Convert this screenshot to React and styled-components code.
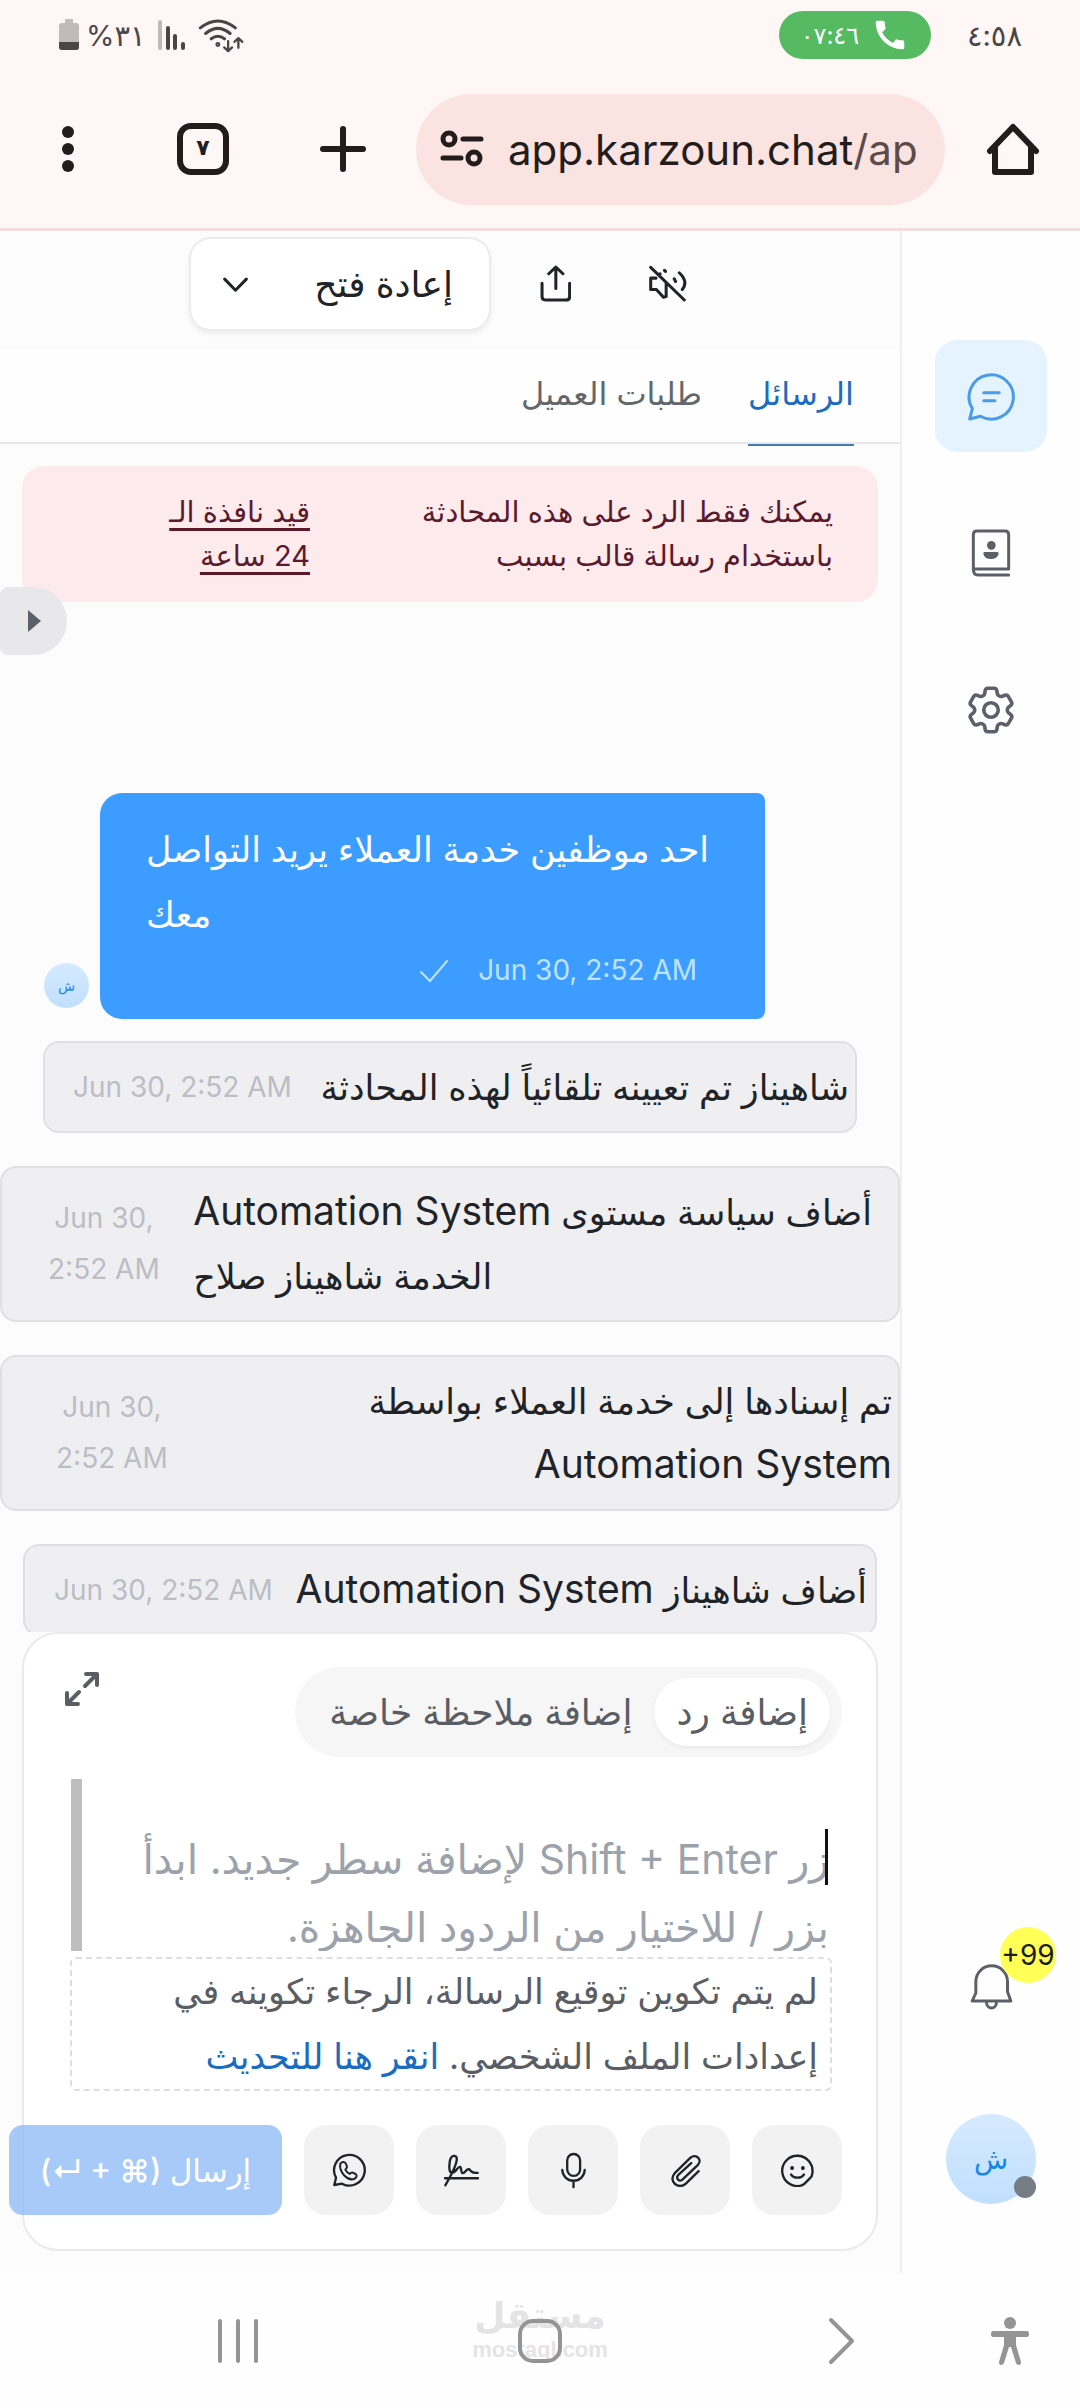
import React, { useState } from 'react';
import styled, { createGlobalStyle } from 'styled-components';
import { MdCall } from 'react-icons/md';
import { HiOutlineCog6Tooth } from 'react-icons/hi2';

const GlobalStyle = createGlobalStyle`
  * {
    box-sizing: border-box;
  }
  body {
    margin: 0;
    background: #fefefe;
    font-family: Inter, "DejaVu Sans", sans-serif;
    color: #202327;
  }
  button {
    font-family: inherit;
    color: inherit;
    border: 0;
    padding: 0;
    background: none;
    cursor: pointer;
  }
  svg {
    display: block;
    flex: none;
  }
`;

const Screen = styled.div`
  display: flex;
  flex-direction: column;
  height: 100vh;
  overflow: hidden;
`;

/* Phone status bar */

const Chrome = styled.header`
  background: #fff7f5;
  border-bottom: 3px solid #f0dfde;
  flex: none;
`;

const StatusBar = styled.div`
  display: flex;
  justify-content: space-between;
  align-items: center;
  height: 70px;
  padding: 0 58px;
  color: #4a4646;
  font-size: 29px;
`;

const StatusGroup = styled.div`
  display: flex;
  align-items: center;
  gap: ${({ $gap }) => $gap}px;
`;

const CallPill = styled.div`
  display: flex;
  align-items: center;
  justify-content: center;
  gap: 12px;
  width: 152px;
  height: 48px;
  border-radius: 24px;
  background: #55ba62;
  color: #fff;
  font-size: 24px;
`;

/* Browser toolbar */

const BrowserBar = styled.div`
  display: grid;
  grid-template-columns: 136px 134px 146px 1fr 135px;
  align-items: center;
  justify-items: center;
  height: 158px;
  color: #231c1c;
`;

const TabCount = styled.button`
  width: 52px;
  height: 52px;
  padding-bottom: 4px;
  border: 6px solid #231c1c;
  border-radius: 14px;
  font-size: 22px;
  font-weight: 700;
  line-height: 30px;
`;

const Address = styled.button`
  display: flex;
  align-items: center;
  justify-self: stretch;
  gap: 24px;
  height: 111px;
  padding: 0 20px 0 24px;
  border-radius: 56px;
  background: #fae3e1;
  font-size: 42px;
  white-space: nowrap;
  overflow: hidden;

  span span {
    color: #5d4a4a;
  }
`;

/* Application */

const AppArea = styled.div`
  display: flex;
  flex: 1;
  min-height: 0;
`;

const Sidebar = styled.nav`
  display: flex;
  flex-direction: column;
  align-items: center;
  width: 180px;
  padding: 109px 0 69px;
  border-left: 2px solid #efefef;
  background: #fefefe;
  flex: none;
`;

const SideItem = styled.button`
  display: flex;
  align-items: center;
  justify-content: center;
  position: relative;
  width: 112px;
  height: 112px;
  margin-bottom: ${({ $space }) => $space || 45}px;
  border-radius: 22px;
  color: ${({ $active }) => ($active ? '#4a9be8' : '#5c6169')};
  background: ${({ $active }) => ($active ? '#e4f3fd' : 'transparent')};
`;

const Spacer = styled.div`
  flex: 1;
`;

const Badge = styled.span`
  position: absolute;
  top: -4px;
  right: -9px;
  width: 56px;
  height: 56px;
  border-radius: 50%;
  background: #ffff57;
  color: #1c1c1c;
  font-size: 28px;
  line-height: 56px;
  text-align: center;
`;

const Avatar = styled.span`
  display: block;
  position: relative;
  width: ${({ $size }) => $size}px;
  height: ${({ $size }) => $size}px;
  border-radius: 50%;
  background: linear-gradient(#d6eafe, #c0dffe);
  color: #1687e6;
  font-size: ${({ $size }) => ($size > 60 ? 28 : 14)}px;
  line-height: ${({ $size }) => $size}px;
  text-align: center;
  flex: none;
`;

const Presence = styled.i`
  position: absolute;
  right: 0;
  bottom: 6px;
  width: 22px;
  height: 22px;
  border-radius: 50%;
  background: #787c85;
`;

const Conversation = styled.main`
  display: flex;
  flex-direction: column;
  position: relative;
  flex: 1;
  min-width: 0;
  overflow: hidden;
  background: #fcfcfc;
`;

const Actions = styled.div`
  display: flex;
  align-items: center;
  gap: 16px;
  height: 118px;
  padding: 0 185px 14px 0;
  flex: none;
`;

const IconButton = styled.button`
  display: flex;
  align-items: center;
  justify-content: center;
  width: 96px;
  height: 64px;
`;

const ReopenButton = styled.button`
  display: flex;
  align-items: center;
  justify-content: space-between;
  width: 302px;
  height: 94px;
  margin-top: 2px;
  padding: 0 36px 0 32px;
  border: 2px solid #ececec;
  border-radius: 22px;
  background: #fff;
  box-shadow: 0 3px 5px rgba(0, 0, 0, 0.06);
  font-size: 36px;
`;

const Tabs = styled.div`
  display: flex;
  gap: 46px;
  height: 95px;
  padding: 0 46px;
  border-bottom: 2px solid #e8e8e8;
  background: #fefefe;
  flex: none;
`;

const Tab = styled.button`
  height: 97px;
  padding-bottom: 6px;
  border-bottom: 2px solid ${({ $active }) => ($active ? '#3f7cb4' : 'transparent')};
  color: ${({ $active }) => ($active ? '#1a6cc0' : '#63666b')};
  font-size: 32px;
`;

const Alert = styled.div`
  display: flex;
  justify-content: space-between;
  margin: 22px 22px 0;
  padding: 24px 45px;
  border-radius: 22px;
  background: #fdeaec;
  color: #5b1a2c;
  font-size: 29px;
  line-height: 44px;
  flex: none;

  a {
    width: 243px;
    color: inherit;
    white-space: nowrap;
    text-decoration-thickness: 3px;
    text-underline-offset: 6px;
  }
`;

const PanelToggle = styled.button`
  display: flex;
  align-items: center;
  justify-content: center;
  position: absolute;
  left: 0;
  top: 356px;
  width: 67px;
  height: 68px;
  border-radius: 8px 34px 34px 8px;
  background: #e8e8eb;
  color: #5c6169;
`;

const MessageList = styled.div`
  display: flex;
  flex-direction: column;
  flex: 1;
  min-height: 0;
  overflow: hidden;
  padding-top: 191px;
`;

const MessageRow = styled.div`
  display: flex;
  align-items: flex-end;
  gap: 11px;
  margin: 0 135px 22px 44px;
  flex: none;
`;

const Bubble = styled.div`
  flex: 1;
  padding: 24px 50px 25px 46px;
  border-radius: 22px 8px 8px 22px;
  background: #3c9cff;
  color: #fff;
  font-size: 35px;
  line-height: 65px;
  text-align: left;
`;

const BubbleMeta = styled.div`
  display: flex;
  align-items: center;
  gap: 28px;
  padding-right: 18px;
  color: #bfe3ff;
  font-size: 28px;
  line-height: 47px;
`;

const AvatarSlot = styled.div`
  padding-bottom: 11px;
`;

const Event = styled.div`
  display: flex;
  align-items: center;
  justify-content: space-between;
  margin: 0 ${({ $right }) => $right || 0}px 33px ${({ $left }) => $left || 0}px;
  padding: 12px ${({ $textInset }) => $textInset}px 12px ${({ $timeInset }) => $timeInset}px;
  border: 2px solid #dfe0e4;
  border-radius: 16px;
  background: #efeff2;
  font-size: 35px;
  line-height: 64px;
  text-align: ${({ $align }) => $align || 'right'};
  flex: none;
`;

const Latin = styled.span`
  font-size: 39px;
  line-height: 1;
`;

const EventTime = styled.time`
  color: #bbbdc7;
  font-size: 28px;
  line-height: 51px;
  text-align: center;
`;

/* Composer */

const Composer = styled.form`
  margin: 0 22px 22px;
  height: 619px;
  padding: 33px 34px 0 44px;
  border: 2px solid #eaeaec;
  border-radius: 36px;
  background: #fff;
  flex: none;
`;

const ComposerTop = styled.div`
  display: flex;
  justify-content: space-between;
  align-items: flex-start;
`;

const ExpandButton = styled.button`
  margin: 4px 0 0 -4px;
  color: #5a5d63;
`;

const ModeSwitch = styled.div`
  display: flex;
  align-items: center;
  height: 90px;
  padding: 0 12px;
  border-radius: 45px;
  background: #f6f6f6;
`;

const Mode = styled.button`
  height: 68px;
  padding: 0 22px;
  border-radius: 34px;
  color: #5a5d63;
  font-size: 36px;
  background: ${({ $active }) => ($active ? '#fff' : 'transparent')};
  box-shadow: ${({ $active }) => ($active ? '0 2px 4px rgba(0, 0, 0, 0.06)' : 'none')};
`;

const Editor = styled.div`
  display: flex;
  position: relative;
  height: 172px;
  margin: 22px 13px 6px 3px;
`;

const TextBox = styled.textarea`
  flex: 1;
  min-width: 0;
  padding: 46px 0 0;
  border: 0;
  outline: 0;
  resize: none;
  overflow: hidden;
  background: transparent;
  font: 41px/68px Inter, "DejaVu Sans", sans-serif;

  &::placeholder {
    color: #9ca2ab;
    opacity: 1;
  }
`;

const Caret = styled.i`
  position: absolute;
  right: 1px;
  top: 50px;
  width: 3px;
  height: 56px;
  background: #111;
`;

const ScrollThumb = styled.div`
  width: 11px;
  background: #bebebe;
`;

const Signature = styled.p`
  margin: 0 10px 0 2px;
  padding: 0 12px;
  border: 2px dashed #dedede;
  border-radius: 6px;
  color: #5a5d63;
  font-size: 35px;
  line-height: 65px;
  white-space: nowrap;

  a {
    color: #1a6cc0;
    text-decoration: none;
  }
`;

const Toolbar = styled.div`
  display: flex;
  gap: 22px;
  margin-top: 34px;
`;

const ToolButton = styled.button`
  display: flex;
  align-items: center;
  justify-content: center;
  width: 90px;
  height: 90px;
  border-radius: 22px;
  background: #f2f2f3;
  flex: none;
`;

const SendButton = styled.button`
  width: 273px;
  height: 90px;
  border-radius: 14px;
  background: rgba(134, 182, 247, 0.72);
  color: #fff;
  font-size: 31px;
  font-weight: 500;
  white-space: nowrap;
  flex: none;
`;

/* System navigation */

const SystemNav = styled.footer`
  display: grid;
  grid-template-columns: 10fr 21fr 10fr 140px;
  align-items: center;
  justify-items: center;
  position: relative;
  height: 135px;
  padding-left: 140px;
  background: #fefefe;
  color: #949494;
  flex: none;
`;

const Watermark = styled.div`
  position: absolute;
  left: 50%;
  top: 20px;
  transform: translateX(-50%);
  color: #e4e4e4;
  font-family: "Liberation Sans", "DejaVu Sans", sans-serif;
  font-size: 22px;
  font-weight: 700;
  line-height: 22px;
  text-align: center;

  strong {
    display: block;
    font-size: 36px;
    line-height: 46px;
  }
`;

const NavButton = styled.button`
  position: relative;
`;

/* Stroke icon; each drawing brings its own view box */
const Icon = ({ box, size, height, stroke = 7, children }) => (
  <svg
    viewBox={box}
    width={size}
    height={height || size}
    fill="none"
    stroke="currentColor"
    strokeWidth={stroke}
    strokeLinecap="round"
    strokeLinejoin="round"
    aria-hidden="true"
  >
    {children}
  </svg>
);

const BatteryIcon = () => (
  <svg width="22" height="32" viewBox="0 0 22 32">
    <path d="M7 0h8v4h3a3 3 0 0 1 3 3v21a3 3 0 0 1-3 3H4a3 3 0 0 1-3-3V7a3 3 0 0 1 3-3h3z" fill="#c0bbba" />
    <path d="M1 23h20v5a3 3 0 0 1-3 3H4a3 3 0 0 1-3-3z" fill="#4a4646" />
  </svg>
);

const SignalIcon = () => (
  <Icon box="0 0 28 32" size={28} height={32} stroke={4}>
    <path d="M2 3v26" stroke="#c0b8b7" />
    <path d="M10 9v20M17 17v12M25 25v4" />
  </Icon>
);

const WifiIcon = () => (
  <Icon box="470 48 142 110" size={47} height={37} stroke={9}>
    <path d="M477 80Q530 38 583 80M493 97Q530 66 567 97M510 113Q530 98 550 113" />
    <circle cx="530" cy="130" r="3" />
    <path d="M561 120v28M549 139l12 11 12-11M592 140v-27M580 122l12-11 12 11" strokeWidth="7" />
  </Icon>
);

const SiteInfoIcon = () => (
  <Icon box="0 0 44 38" size={44} height={38} stroke={5}>
    <circle cx="9" cy="9" r="6" />
    <path d="M23 9h18M3 28h18" />
    <circle cx="34" cy="28" r="6" />
  </Icon>
);

const HomeIcon = () => (
  <Icon box="0 0 54 54" size={54} stroke={6}>
    <path d="M4 29L27 5l23 24M9 26v24h36V26" />
  </Icon>
);

const ChatIcon = () => (
  <Icon box="200 154 146 146" size={49} stroke={9}>
    <path d="M216 263A66 66 0 1 1 240 286L208 294Z" />
    <path d="M250 216h46M250 240h33" />
  </Icon>
);

const ContactsIcon = () => (
  <Icon box="203 630 144 144" size={48} stroke={9}>
    <path d="M222 750V647q0-11 11-11h84q11 0 11 11v103H222q0 18 14 18h92" />
    <circle cx="276" cy="679" r="13" fill="currentColor" stroke="none" />
    <path d="M256 699h38q5 0 4 5-4 16-23 16-20 0-23-16-1-5 4-5z" fill="currentColor" stroke="none" />
  </Icon>
);

const BellIcon = () => (
  <Icon box="203 190 140 144" size={47} height={48} stroke={9}>
    <path d="M226 280v-34a47 47 0 0 1 95 0v30l10 28H215z" />
    <path d="M258 308a15 17 0 0 0 30 0" />
  </Icon>
);

const MuteIcon = () => (
  <Icon box="1372 90 116 110" size={39} height={37} stroke={9}>
    <path d="M1380 97l100 97M1396 129h-16v34h17l21 23 8-2v-40M1404 118l4-2M1421 106l3 3M1450 131l4 8M1465 113q28 26 9 50" />
  </Icon>
);

const ShareIcon = () => (
  <Icon box="1044 90 92 110" size={31} height={37} stroke={9}>
    <path d="M1050 144v40q0 10 10 10h62q10 0 10-10v-40M1091 160V97M1070 116l21-20 21 20" />
  </Icon>
);

const SmileIcon = () => (
  <Icon box="1440 128 98 98" size={33}>
    <path d="M1505 220A45 45 0 1 1 1532 190q0 5-5 9l-17 17q-3 3-7 4" />
    <path d="M1470 189a21 16 0 0 0 38 0" />
    <path d="M1473 169v1M1505 169v1" strokeWidth="11" />
  </Icon>
);

const ClipIcon = () => (
  <Icon box="1102 128 98 98" size={33}>
    <path d="M1190 179l-38 37c-22 20-54-8-33-31l47-46c16-14 36 6 22 21l-47 45c-8 6-20-4-12-14l39-36" />
  </Icon>
);

const MicIcon = () => (
  <Icon box="775 124 80 112" size={27} height={37}>
    <rect x="796" y="130" width="39" height="66" rx="19" />
    <path d="M781 178a34 33 0 0 0 68 0M815 213v18" />
  </Icon>
);

const SignatureIcon = () => (
  <Icon box="424 126 110 104" size={37} height={35}>
    <path d="M431 222c14-24 34-58 34-78 0-14-18-14-21 8-3 20-1 33 7 33 11 0 15-17 23-18 6 0 2 19 9 19s11-14 18-12c6 3 6 13 26 11M430 201h98" />
  </Icon>
);

const WhatsappIcon = () => (
  <Icon box="90 126 102 102" size={34}>
    <path d="M102 200a46 46 0 1 1 18 18l-23 4z" />
    <path d="M115 158c6-7 14-6 17 1l3 8q0 4-5 9 4 8 13 13 5-5 9-4l9 4c6 4 2 12-5 15-18 6-46-19-41-46z" strokeWidth="6" />
  </Icon>
);

const TOOLS = [
  { label: 'رموز تعبيرية', Glyph: SmileIcon },
  { label: 'مرفق', Glyph: ClipIcon },
  { label: 'تسجيل صوتي', Glyph: MicIcon },
  { label: 'توقيع', Glyph: SignatureIcon },
  { label: 'قالب واتساب', Glyph: WhatsappIcon },
];

const BrowserChrome = () => (
  <Chrome>
    <StatusBar>
      <StatusGroup $gap={12}>
        <StatusGroup $gap={6}>
          <BatteryIcon />
          <span>%٣١</span>
        </StatusGroup>
        <SignalIcon />
        <WifiIcon />
      </StatusGroup>
      <StatusGroup $gap={36}>
        <CallPill>
          <span>٠٧:٤٦</span>
          <MdCall size={38} />
        </CallPill>
        <span>٤:٥٨</span>
      </StatusGroup>
    </StatusBar>
    <BrowserBar>
      <button aria-label="القائمة">
        <Icon box="0 0 16 48" size={16} height={48} stroke={0}>
          <g fill="currentColor">
            <circle cx="8" cy="7" r="6" />
            <circle cx="8" cy="24" r="6" />
            <circle cx="8" cy="41" r="6" />
          </g>
        </Icon>
      </button>
      <TabCount>٧</TabCount>
      <button aria-label="علامة تبويب جديدة">
        <Icon box="0 0 48 48" size={48} stroke={6}>
          <path d="M24 4v40M4 24h40" />
        </Icon>
      </button>
      <Address>
        <SiteInfoIcon />
        <span>app.karzoun.chat<span>/ap</span></span>
      </Address>
      <button aria-label="الرئيسية">
        <HomeIcon />
      </button>
    </BrowserBar>
  </Chrome>
);

const SideNav = () => (
  <Sidebar>
    <SideItem $active aria-label="المحادثات">
      <ChatIcon />
    </SideItem>
    <SideItem aria-label="جهات الاتصال">
      <ContactsIcon />
    </SideItem>
    <SideItem aria-label="الإعدادات">
      <HiOutlineCog6Tooth size={58} />
    </SideItem>
    <Spacer />
    <SideItem $space={71} aria-label="الإشعارات">
      <BellIcon />
      <Badge dir="ltr">+99</Badge>
    </SideItem>
    <button aria-label="الحساب">
      <Avatar $size={90}>
        ش
        <Presence />
      </Avatar>
    </button>
  </Sidebar>
);

const Messages = () => (
  <MessageList>
    <MessageRow>
      <Bubble>
        احد موظفين خدمة العملاء يريد التواصل
        <br />
        معك
        <BubbleMeta>
          <time dir="ltr">Jun 30, 2:52 AM</time>
          <Icon box="0 0 32 26" size={32} height={26} stroke={2}>
            <path d="M3 14l9 9L29 3" />
          </Icon>
        </BubbleMeta>
      </Bubble>
      <AvatarSlot>
        <Avatar $size={45}>ش</Avatar>
      </AvatarSlot>
    </MessageRow>
    <Event $left={43} $right={43} $textInset={6} $timeInset={28}>
      <span>شاهيناز تم تعيينه تلقائياً لهذه المحادثة</span>
      <EventTime dir="ltr">Jun 30, 2:52 AM</EventTime>
    </Event>
    <Event $textInset={26} $timeInset={46} $align="left">
      <span>
        أضاف سياسة مستوى <Latin>Automation System</Latin>
        <br />
        الخدمة شاهيناز صلاح
      </span>
      <EventTime dir="ltr">Jun 30,<br />2:52 AM</EventTime>
    </Event>
    <Event $textInset={6} $timeInset={54}>
      <span>
        تم إسنادها إلى خدمة العملاء بواسطة
        <br />
        <Latin>Automation System</Latin>
      </span>
      <EventTime dir="ltr">Jun 30,<br />2:52 AM</EventTime>
    </Event>
    <Event $left={23} $right={23} $textInset={8} $timeInset={29}>
      <span>
        أضاف شاهيناز <Latin>Automation System</Latin>
      </span>
      <EventTime dir="ltr">Jun 30, 2:52 AM</EventTime>
    </Event>
  </MessageList>
);

const ReplyBox = () => {
  const [mode, setMode] = useState('reply');

  return (
    <Composer onSubmit={(e) => e.preventDefault()}>
      <ComposerTop>
        <ModeSwitch>
          <Mode type="button" $active={mode === 'reply'} onClick={() => setMode('reply')}>إضافة رد</Mode>
          <Mode type="button" $active={mode === 'note'} onClick={() => setMode('note')}>إضافة ملاحظة خاصة</Mode>
        </ModeSwitch>
        <ExpandButton type="button" aria-label="توسيع">
          <Icon box="0 0 36 36" size={36} stroke={4}>
            <path d="M21 15L33 3M22 3h11v11M15 21L3 33M3 22v11h11" />
          </Icon>
        </ExpandButton>
      </ComposerTop>
      <Editor>
        <TextBox
          aria-label="نص الرد"
          placeholder={'زر Shift + Enter لإضافة سطر جديد. ابدأ\nبزر / للاختيار من الردود الجاهزة.'}
        />
        <Caret />
        <ScrollThumb />
      </Editor>
      <Signature>
        لم يتم تكوين توقيع الرسالة، الرجاء تكوينه في
        <br />
        إعدادات الملف الشخصي. <a href="#profile">انقر هنا للتحديث</a>
      </Signature>
      <Toolbar>
        {TOOLS.map(({ label, Glyph }) => (
          <ToolButton key={label} type="button" aria-label={label}>
            <Glyph />
          </ToolButton>
        ))}
        <SendButton type="submit">إرسال (⌘ + ↵)</SendButton>
      </Toolbar>
    </Composer>
  );
};

const PhoneNav = () => (
  <SystemNav>
    <Watermark>
      <strong>مستقل</strong>
      mostaql.com
    </Watermark>
    <NavButton aria-label="التطبيقات الأخيرة">
      <Icon box="0 0 44 46" size={44} height={46} stroke={4}>
        <path d="M4 3v40M22 3v40M40 3v40" />
      </Icon>
    </NavButton>
    <NavButton aria-label="الشاشة الرئيسية">
      <Icon box="0 0 48 48" size={48} stroke={4}>
        <rect x="4" y="4" width="40" height="40" rx="13" />
      </Icon>
    </NavButton>
    <NavButton aria-label="رجوع">
      <Icon box="0 0 28 48" size={28} height={48} stroke={4}>
        <path d="M3 3l21 21L3 45" />
      </Icon>
    </NavButton>
    <NavButton aria-label="إمكانية الوصول">
      <svg width="40" height="50" viewBox="0 0 40 50" fill="currentColor">
        <circle cx="20" cy="7" r="6" />
        <path d="M3 15h34q2 0 2 3t-2 3H26v8l5 17q0 3-2 3t-3-2l-5-16h-2l-5 16q-1 2-3 2t-2-3l5-17v-8H3q-2 0-2-3t2-3z" />
      </svg>
    </NavButton>
  </SystemNav>
);

const App = () => (
  <Screen>
    <GlobalStyle />
    <BrowserChrome />
    <AppArea dir="rtl">
      <SideNav />
      <Conversation>
        <Actions>
          <IconButton aria-label="كتم">
            <MuteIcon />
          </IconButton>
          <IconButton aria-label="مشاركة">
            <ShareIcon />
          </IconButton>
          <ReopenButton>
            إعادة فتح
            <Icon box="94 122 74 44" size={25} height={15} stroke={9}>
              <path d="M99 128l32 33 32-33" />
            </Icon>
          </ReopenButton>
        </Actions>
        <Tabs>
          <Tab $active>الرسائل</Tab>
          <Tab>طلبات العميل</Tab>
        </Tabs>
        <Alert>
          <span>
            يمكنك فقط الرد على هذه المحادثة
            <br />
            باستخدام رسالة قالب بسبب
          </span>
          <a href="#window">قيد نافذة الـ<br />24 ساعة</a>
        </Alert>
        <PanelToggle aria-label="إظهار القائمة">
          <svg width="14" height="22" viewBox="0 0 14 22" fill="currentColor">
            <path d="M1 0l13 11L1 22z" />
          </svg>
        </PanelToggle>
        <Messages />
        <ReplyBox />
      </Conversation>
    </AppArea>
    <PhoneNav />
  </Screen>
);

export default App;
